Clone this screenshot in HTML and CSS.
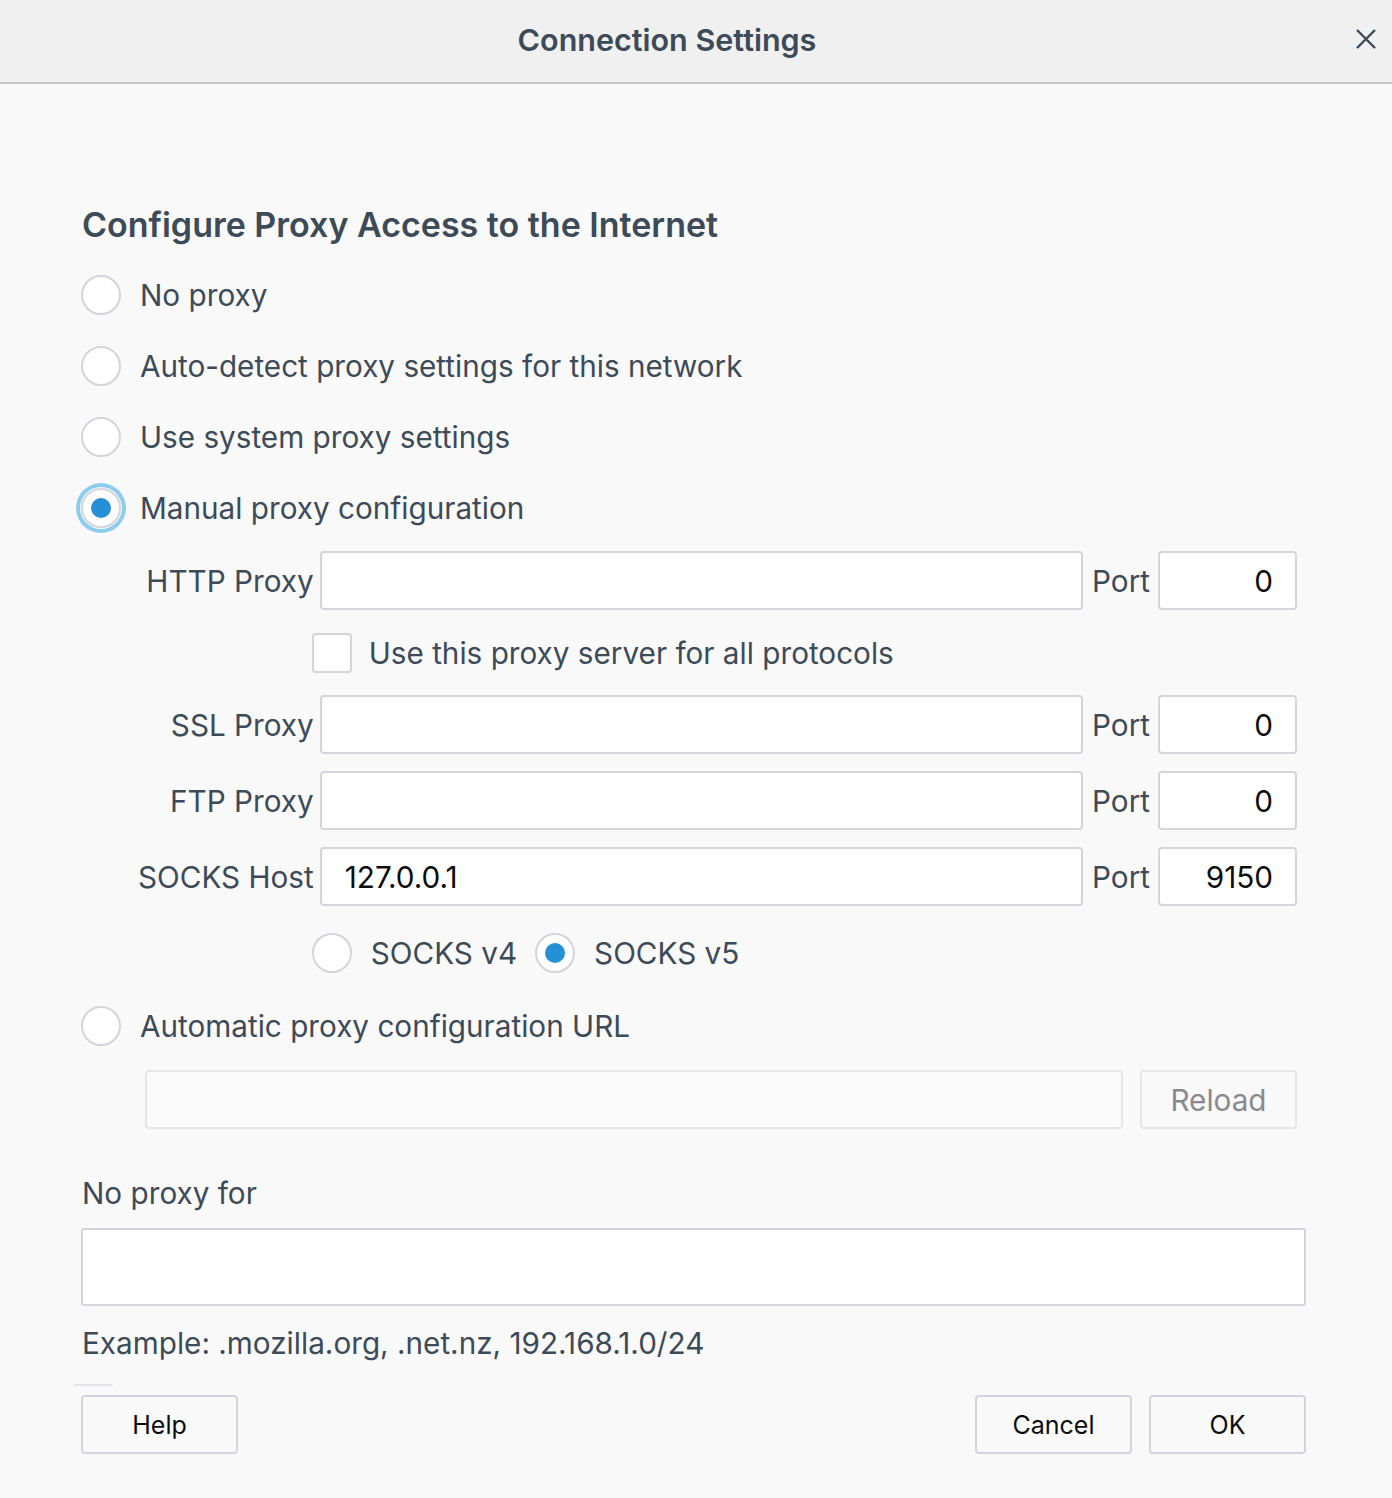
FILE: index.html
```html
<!DOCTYPE html>
<html>
<head>
<meta charset="utf-8">
<link rel="stylesheet" href="styles.css">
</head>
<body>
<div class="dialog">
  <header class="titlebar">
    <div class="title">Connection Settings</div>
    <button class="close" aria-label="Close">
      <svg width="22" height="22" viewBox="0 0 22 22"><path d="M2 2L20 20M20 2L2 20" stroke="#3d4a58" stroke-width="2.4" fill="none"/></svg>
    </button>
  </header>
  <main class="content">
    <h1 class="heading">Configure Proxy Access to the Internet</h1>
    <div class="radio-list">
      <label class="opt"><span class="radio"></span><span>No proxy</span></label>
      <label class="opt"><span class="radio"></span><span>Auto-detect proxy settings for this network</span></label>
      <label class="opt"><span class="radio"></span><span>Use system proxy settings</span></label>
      <label class="opt"><span class="radio checked focused"></span><span>Manual proxy configuration</span></label>
    </div>
    <div class="proxy-grid">
      <span class="lbl">HTTP Proxy</span>
      <div class="field"></div>
      <span class="port-lbl">Port</span>
      <div class="field port">0</div>

      <label class="opt check-row"><span class="checkbox"></span><span>Use this proxy server for all protocols</span></label>

      <span class="lbl">SSL Proxy</span>
      <div class="field"></div>
      <span class="port-lbl">Port</span>
      <div class="field port">0</div>

      <span class="lbl">FTP Proxy</span>
      <div class="field"></div>
      <span class="port-lbl">Port</span>
      <div class="field port">0</div>

      <span class="lbl">SOCKS Host</span>
      <div class="field value">127.0.0.1</div>
      <span class="port-lbl">Port</span>
      <div class="field port">9150</div>

      <div class="socks-row">
        <label class="opt"><span class="radio"></span><span>SOCKS v4</span></label>
        <label class="opt"><span class="radio checked"></span><span>SOCKS v5</span></label>
      </div>
    </div>
    <label class="opt auto-url"><span class="radio"></span><span>Automatic proxy configuration URL</span></label>
    <div class="url-row">
      <div class="field disabled"></div>
      <button class="btn disabled-btn">Reload</button>
    </div>
    <div class="noproxy-lbl">No proxy for</div>
    <div class="textarea"></div>
    <div class="example">Example: .mozilla.org, .net.nz, 192.168.1.0/24</div>
    <div class="stub"></div>
    <div class="buttons">
      <button class="btn">Help</button>
      <div class="spacer"></div>
      <button class="btn">Cancel</button>
      <button class="btn">OK</button>
    </div>
  </main>
</div>
</body>
</html>
```

FILE: styles.css
```css
* { box-sizing: border-box; }
html, body { margin: 0; padding: 0; }
body {
  background: #f9f9fa;
  font-family: Inter, "Noto Sans", "Liberation Sans", sans-serif;
  color: #3d4a58;
  width: 1392px;
  height: 1498px;
  overflow: hidden;
}
.titlebar {
  height: 84px;
  background: #f0f0f0;
  border-bottom: 2px solid #c4c4c4;
  display: flex;
  align-items: center;
  justify-content: center;
  padding-right: 58px;
  position: relative;
}
.title {
  font-size: 30.5px;
  font-weight: 600;
  color: #3d4a58;
  margin-top: -4px;
}
.close {
  position: absolute;
  right: 15px;
  top: 28px;
  background: none;
  border: 0;
  padding: 0;
  width: 22px;
  height: 22px;
}
.content {
  padding: 0 87px 0 81px;
  display: flex;
  flex-direction: column;
}
.heading {
  font-size: 34px;
  font-weight: 600;
  margin: 121px 0 0 1px;
  line-height: 40px;
  height: 40px;
}
.radio-list {
  display: flex;
  flex-direction: column;
  gap: 31px;
  margin-top: 30px;
}
.opt {
  display: flex;
  align-items: center;
  height: 40px;
  font-size: 29.7px;
  gap: 19px;
  white-space: nowrap;
}
.radio {
  width: 40px;
  height: 40px;
  border-radius: 50%;
  border: 2px solid #d4d4da;
  background: #fff;
  flex: none;
  position: relative;
}
.radio.checked::after {
  content: "";
  position: absolute;
  left: 8px; top: 8px;
  width: 20px; height: 20px;
  border-radius: 50%;
  background: #2590d5;
}
.radio.focused {
  box-shadow: 0 0 0 1px #f9f9fa, 0 0 0 5px #8cccef;
}
.proxy-grid {
  display: grid;
  grid-template-columns: auto 1fr auto 139px;
  column-gap: 8px;
  row-gap: 17px;
  margin: 23px 0 0 57px;
  width: 1159px;
  align-items: center;
}
.lbl, .port-lbl {
  font-size: 29.7px;
  text-align: right;
  white-space: nowrap;
}
.lbl { margin-right: -2px; }
.port-lbl { padding-left: 1px; }
.field {
  height: 59px;
  background: #fff;
  border: 2px solid #d4d4da;
  border-radius: 4px;
  font-size: 29.7px;
  color: #0c0c0d;
  display: flex;
  align-items: center;
}
.field.value { padding-left: 23px; }
.field.port { justify-content: flex-end; padding-right: 22px; }
.check-row {
  grid-column: 2 / 5;
  margin: 6px 0 5px -8px;
  gap: 17px;
}
.checkbox {
  width: 40px;
  height: 40px;
  border: 2px solid #d4d4da;
  border-radius: 4px;
  background: #fff;
  flex: none;
}
.socks-row {
  grid-column: 2 / 5;
  margin: 10px 0 0 -8px;
  display: flex;
  gap: 18px;
}
.socks-row .opt { gap: 19px; }
.auto-url { margin-top: 33px; }
.url-row {
  display: flex;
  gap: 17px;
  margin: 24px 0 0 64px;
  width: 1152px;
}
.url-row .field { flex: 1; background: #fbfbfb; border-color: #e6e6e8; }
.btn {
  height: 59px;
  width: 157px;
  background: #f9f9fa;
  border: 2px solid #d4d4da;
  border-radius: 4px;
  font-family: inherit;
  font-size: 25px;
  color: #0c0c0d;
  padding: 0;
}
.btn.disabled-btn { color: #8a8a8e; border-color: #e6e6e8; font-size: 29.7px; }
.noproxy-lbl {
  font-size: 29.7px;
  margin-top: 46px;
  line-height: 36px;
  margin-left: 1px;
}
.textarea {
  height: 78px;
  margin-top: 17px;
  background: #fff;
  border: 2px solid #d4d4da;
  border-radius: 3px;
  width: 1225px;
}
.example {
  font-size: 29.7px;
  line-height: 36px;
  margin-top: 19px;
  margin-left: 1px;
}
.stub {
  width: 40px;
  height: 4px;
  margin: 23px 0 0 -8px;
  border-top: 2px solid #e4e4e8;
  border-radius: 4px 4px 0 0;
}
.buttons {
  display: flex;
  gap: 17px;
  margin-top: 7px;
  width: 1225px;
}
.spacer { flex: 1; }
```
